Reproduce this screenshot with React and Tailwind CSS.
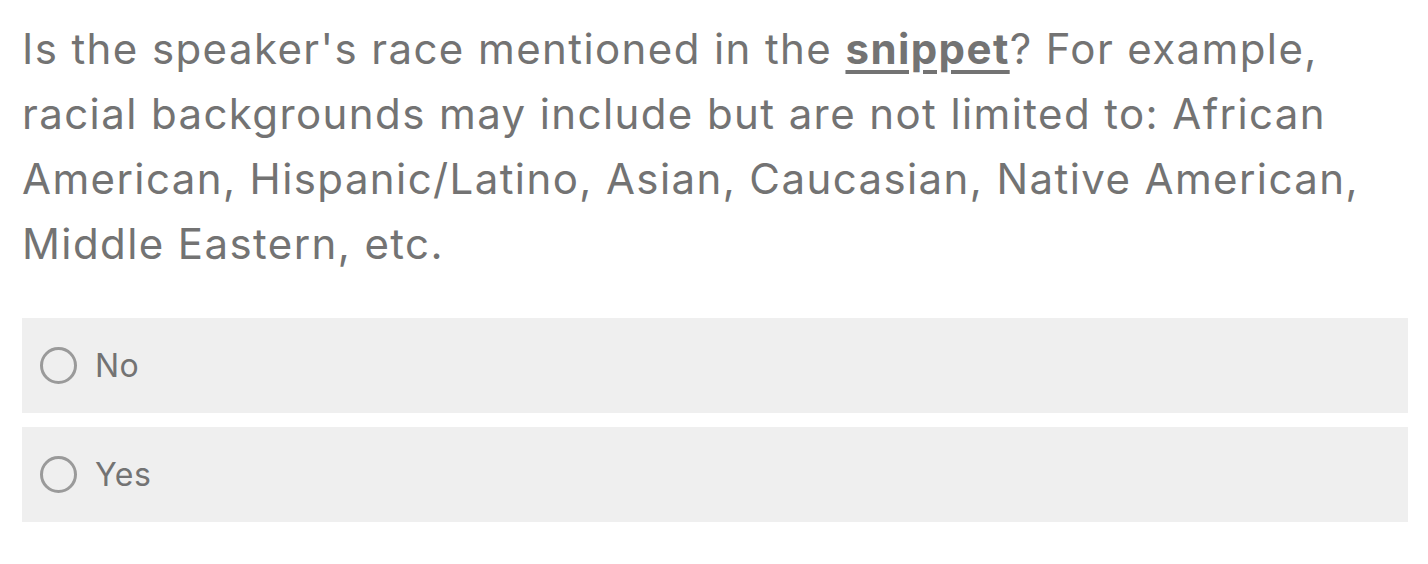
const options = ['No', 'Yes']

export default function App() {
  return (
    <div className="min-h-screen bg-white pl-[22px] pr-[20px] pt-[16px] text-[#737373] [font-family:Inter,'Noto_Sans',sans-serif]">
      <p className="text-[42px] leading-[65px] tracking-[1.4px]">
        Is the speaker's race mentioned in the{' '}
        <span className="font-bold underline decoration-[4px] underline-offset-[6px]">snippet</span>? For
        example, racial backgrounds may include but are not limited to: African American, Hispanic/Latino,
        Asian, Caucasian, Native American, Middle Eastern, etc.
      </p>

      <div className="mt-[42px] flex flex-col gap-[14px]">
        {options.map((opt) => (
          <label key={opt} className="flex h-[95px] cursor-pointer items-center gap-[18px] bg-[#efefef] pl-[18px]">
            <span className="h-[37px] w-[37px] shrink-0 rounded-full border-[3px] border-[#9a9a9a]" />
            <span className="text-[32px] leading-none tracking-[0.5px]">{opt}</span>
          </label>
        ))}
      </div>
    </div>
  )
}
